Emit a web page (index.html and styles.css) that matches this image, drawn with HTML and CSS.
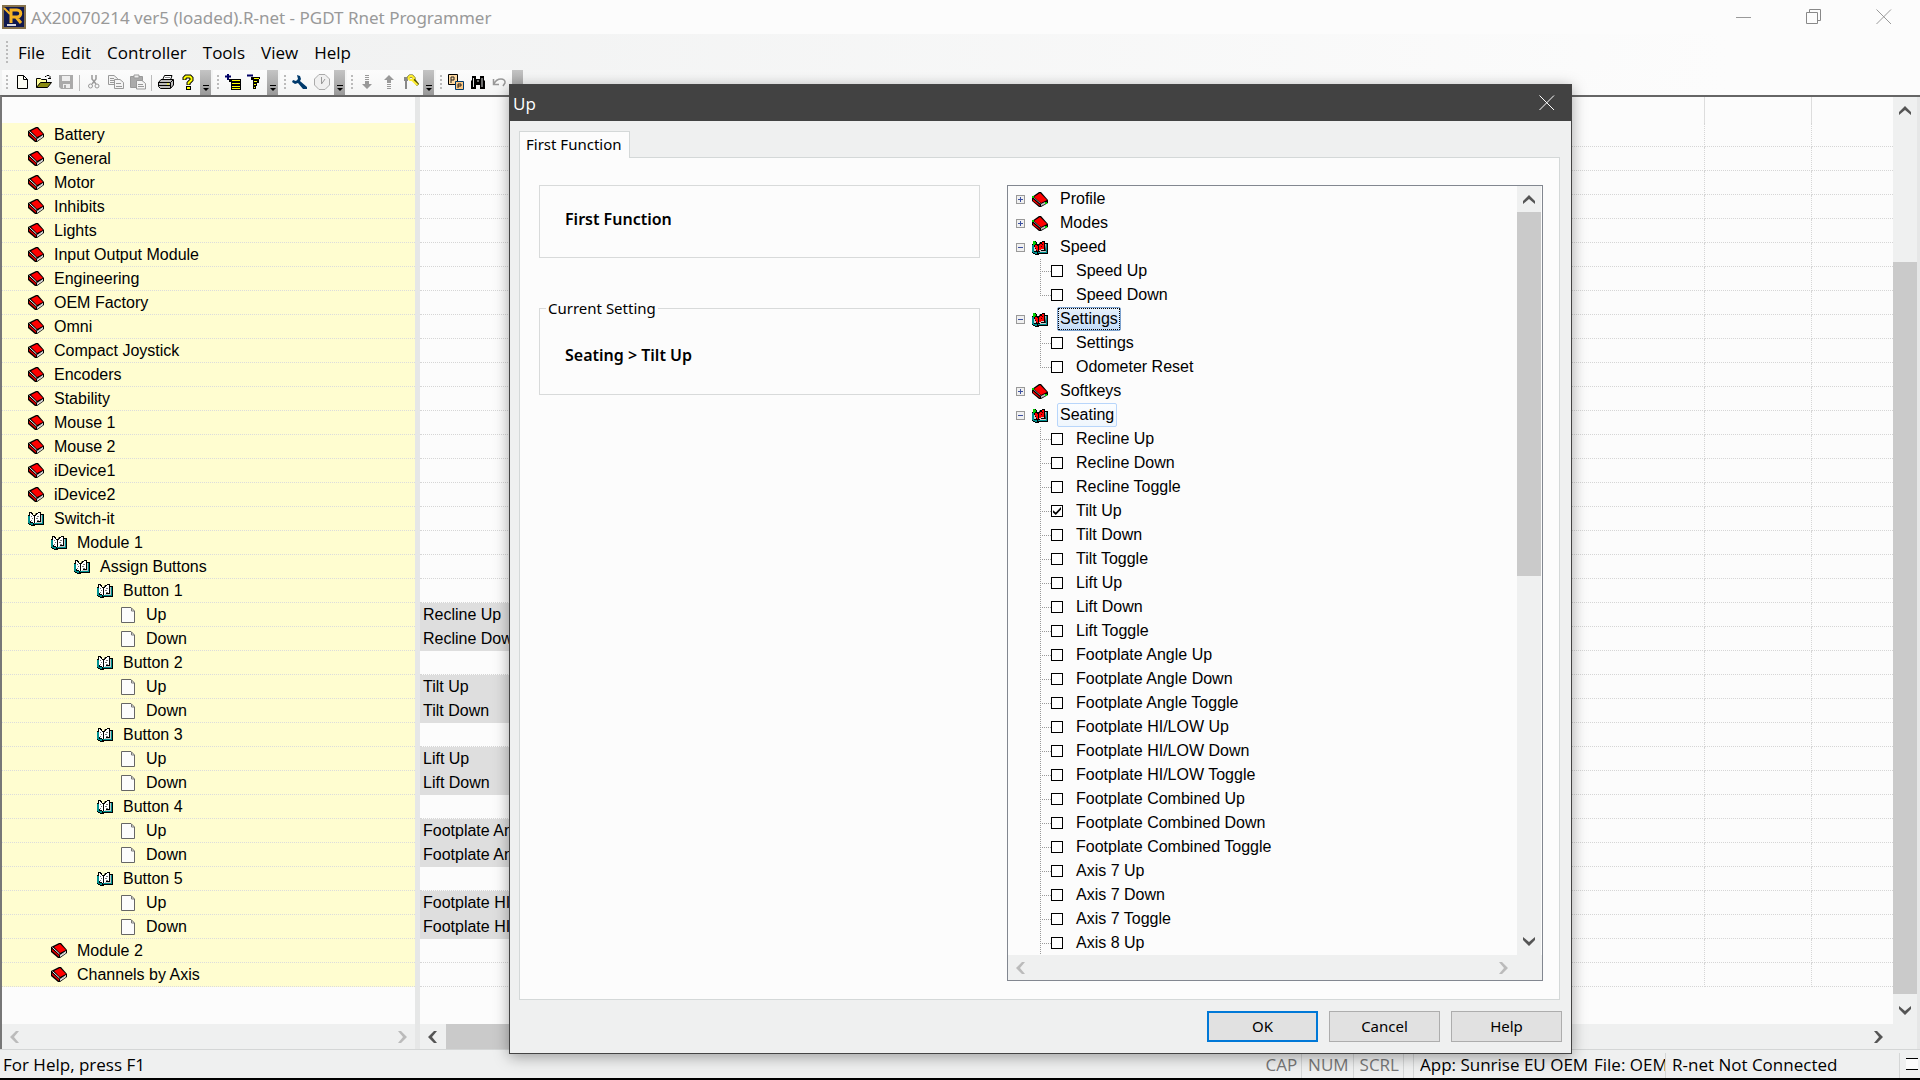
FILE: index.html
```html
<!DOCTYPE html>
<html lang="en">
<head>
    <meta charset="UTF-8">
    <meta name="viewport" content="width=device-width, initial-scale=1.0">
    <title>AX20070214 ver5 (loaded).R-net - PGDT Rnet Programmer</title>
    <link rel="stylesheet" href="styles.css">
</head>
<body>

<!-- Icon sprites -->
<svg class="sprites" aria-hidden="true">
    <symbol id="i-book" viewBox="0 0 16 15">
        <path d="M0 4L8 0H10L16 7V10L9 15H7L0 9Z" fill="#000"/>
        <path d="M3 4L9 1L15 7L9 10Z" fill="#f00"/>
        <path d="M1 6L8 12V14L1 8Z" fill="#e00000"/>
        <path d="M1.500 4.500L8.500 11" stroke="#fff"/>
        <path d="M9 12L15 8V10L9 14Z" fill="#fff"/>
        <path d="M9 12.500L15 9" stroke="#888" stroke-width=".5"/>
    </symbol>
    <symbol id="i-book-dlg" viewBox="0 0 16 15">
        <path d="M0 5L7 0H9L16 8V11L9 15H7L0 9Z" fill="#000"/>
        <path d="M2 5L8 1L15 8L9 11Z" fill="#f00"/>
        <path d="M1 7L8 13V14L1 9Z" fill="#f00"/>
        <path d="M1.500 5.500L8.500 11.500" stroke="#888"/>
        <path d="M9 12L13 10V12L9 14Z" fill="#c0c0c0"/>
        <path d="M0 4h2v2h-2zM13 10h2v2h-2z" fill="#0c0"/>
    </symbol>
    <symbol id="i-open" viewBox="0 0 16 15">
        <path d="M0 4H1V1H4V2H5V4H7L8 2H10V1H13V3H16V14H7V15H3V14H1V13H0Z" fill="#000"/>
        <path d="M0 5H2V12H5V14H3V13H1V12H0ZM6 12H14V4H15V13H6Z" fill="#009090"/>
        <path d="M2 2H3V3H4V4H5V5H6V12H5V11H3V10H2ZM7 5H8V4H9V3H10V2H12V10H9V11H8V12H7Z" fill="#fff"/>
        <path d="M13 4H14V12H8V11H13Z" fill="#c8c8c8"/>
        <path d="M3 5h1v1h-1zM4 7h1v1h-1zM3 9h1v1h-1zM9 5h2v1h-2zM8 7h2v1h-2zM9 9h2v1h-2z" fill="#777"/>
    </symbol>
    <symbol id="i-open-dlg" viewBox="0 0 16 15">
        <path d="M0 4H1V1H4V2H5V4H7L8 2H10V1H13V3H16V14H7V15H3V14H1V13H0Z" fill="#000"/>
        <path d="M0 5H2V12H5V14H3V13H1V12H0ZM6 12H14V4H15V13H6Z" fill="#009090"/>
        <path d="M1 1H3V2H4V4H3V5H1Z" fill="#0c0"/>
        <path d="M3 5H5V6H6V11H5V10H4V8H3ZM7 5H8V4H10V2H12V9H9V10H7Z" fill="#f00"/>
        <path d="M2 7H3V9H4V11H2ZM7 10H9V9H12V10H9V11H7ZM13 4H14V11H8V12H14Z" fill="#ccc"/>
        <path d="M10 4h1v1h-1zM9 6h1v1h-1z" fill="#400"/>
    </symbol>
    <symbol id="i-doc" viewBox="0 0 14 16">
        <path d="M.5.5H10L13.500 4V15.500H.5Z" fill="#fcfcfc" stroke="#666"/>
        <path d="M10.500 1V4H13" fill="none" stroke="#777"/>
    </symbol>
    <symbol id="i-up" viewBox="0 0 12 10"><path d="M0 9V6L6 0L12 6V9L6 4Z" fill="currentColor"/></symbol>
    <symbol id="i-down" viewBox="0 0 12 10"><path d="M0 1V4L6 10L12 4V1L6 6Z" fill="currentColor"/></symbol>
    <symbol id="i-left" viewBox="0 0 10 12"><path d="M9 0H6L0 6L6 12H9L4 6Z" fill="currentColor"/></symbol>
    <symbol id="i-right" viewBox="0 0 10 12"><path d="M1 0H4L10 6L4 12H1L6 6Z" fill="currentColor"/></symbol>
</svg>

<div class="window">
    <header class="titlebar">
        <svg class="app-icon" viewBox="0 0 24 24">
            <rect x="1" y="1" width="22" height="22" fill="#10194f" stroke="#85714c" stroke-width="2"/>
            <path d="M9 18V5H15C20 5 20 12 15 12H10M14 12L19 18" fill="none" stroke="#f5b324" stroke-width="3"/>
            <path d="M2 3L8 9" stroke="#f5b324" stroke-width="2"/>
            <path d="M5 19H14V21H5Z" fill="#d8d8e0"/>
        </svg>
        <h1>AX20070214 ver5 (loaded).R-net - PGDT Rnet Programmer</h1>
        <div class="win-buttons">
            <button aria-label="Minimize"><svg width="16" height="16"><path d="M0 8.500H15" stroke="#999"/></svg></button>
            <button aria-label="Restore"><svg width="16" height="16"><path d="M.5 3.500H11.500V14.500H.5ZM3.500 3V.5H14.500V11.500H12" fill="none" stroke="#888"/></svg></button>
            <button aria-label="Close"><svg width="16" height="16"><path d="M.5.5L15 15M15 .5L.5 15" stroke="#999"/></svg></button>
        </div>
    </header>

    <nav class="menubar">
        <button>File</button>
        <button>Edit</button>
        <button>Controller</button>
        <button>Tools</button>
        <button>View</button>
        <button>Help</button>
    </nav>

    <div class="toolbar">
        <div class="tool-group">
            <button aria-label="New"><svg width="16" height="16"><path d="M3.500 1.500H9.500L13.500 5.500V14.500H3.500ZM9.500 1.500V5.500H13.500" fill="#fcfcf4" stroke="#000"/></svg></button>
            <button aria-label="Open"><svg width="16" height="16"><path d="M.5 13.500V4.500H4.500L5.500 5.500H10.500V8" fill="#ffff9c" stroke="#000"/><path d="M.5 13.500L4.500 8.500H15.500L11.500 13.500Z" fill="#8b8b10" stroke="#000"/><path d="M9 2.500H10L11 1.500H13L14 2.500V5M12 4.500H15" fill="none" stroke="#000"/></svg></button>
            <button aria-label="Save"><svg width="16" height="16"><path d="M1 1H15V15H3L1 13Z" fill="#aaa"/><path d="M4 2H12V7H4ZM5 10H12V14H5Z" fill="#eee"/><path d="M6 11H8V14H6Z" fill="#aaa"/></svg></button>
            <span class="sep"></span>
            <button aria-label="Cut"><svg width="16" height="16"><path d="M6 1V5L10 10M10 1V5L6 10" fill="none" stroke="#999" stroke-width="1.500"/><circle cx="4.500" cy="12" r="2" fill="none" stroke="#999"/><circle cx="11" cy="12" r="2" fill="none" stroke="#999"/></svg></button>
            <button aria-label="Copy"><svg width="16" height="16"><path d="M.5 1.500H6L9.500 4.500V10.500H.5Z" fill="#f4f4f4" stroke="#999"/><path d="M6.500 5.500H12L15.500 8.500V14.500H6.500Z" fill="#f4f4f4" stroke="#999"/><path d="M2 4.500H6M2 6.500H6M2 8.500H6M8 9.500H13M8 12.500H14" stroke="#999"/></svg></button>
            <button aria-label="Paste"><svg width="16" height="16"><path d="M.5 2.500H12.500V13.500H.5Z" fill="#aaa" stroke="#999"/><path d="M4 1H9V4H4Z" fill="#eee" stroke="#999"/><path d="M6.500 6.500H12L15.500 9.500V15H6.500Z" fill="#f4f4f4" stroke="#999"/><path d="M8 10.500H13M8 12.500H14" stroke="#999"/></svg></button>
            <span class="sep"></span>
            <button aria-label="Print"><svg width="16" height="16"><path d="M4.500 6L6.500 1.500H14L12.500 6" fill="#fff" stroke="#000"/><path d="M.5 8.500L3 5.500H15.500V11L12.500 14.500H2.500L.5 12.500Z" fill="#bbb" stroke="#000"/><path d="M0 8.500H12.500V14M12.500 8.500L15 6M1 11.500H12" fill="none" stroke="#000"/><path d="M9 10H11" stroke="#ff0"/><path d="M7 3.500H12" stroke="#888"/></svg></button>
            <button aria-label="Help"><svg width="16" height="16"><path d="M4.500 6V4L6 2.500H10L11.500 4V6L8.500 9V11" fill="none" stroke="#000" stroke-width="4"/><path d="M6 12H11V16H6Z" fill="#000"/><path d="M4.500 5.500V4L6 2.500H10L11.500 4V6L8.500 9V10.500" fill="none" stroke="#ff0" stroke-width="2"/><path d="M7 13H10V15H7Z" fill="#ff0"/></svg></button>
            <button class="more" aria-label="More buttons"></button>
        </div>
        <div class="tool-group">
            <button aria-label="Expand"><svg width="16" height="16"><path d="M0 2.500H6M3 0V6" stroke="#006" stroke-width="2"/><path d="M4 5H16V16H6V8H4Z" fill="#000"/><path d="M7 6.500H15M7 9.500H15M7 12.500H15M7 14.500H15" stroke="#ff0"/></svg></button>
            <button aria-label="Collapse"><svg width="16" height="16"><path d="M0 1.500H6" stroke="#006" stroke-width="2"/><path d="M4 3H13V5H12V9H10V12H9V15H6V6H4Z" fill="#000"/><path d="M7 4.500H12M7 7.500H10M7 10.500H9M7 13.500H8" stroke="#ff0"/></svg></button>
            <button class="more" aria-label="More buttons"></button>
        </div>
        <div class="tool-group">
            <button aria-label="Settings"><svg width="16" height="16"><path d="M5 1L8 2L9 5L8 7L15 13V15H11L6 9L3 10L0 8L1 6L4 7L6 5Z" fill="#003a6c"/></svg></button>
            <button aria-label="Timer"><svg width="16" height="16"><path d="M5 .5H11L15.500 5V11L11 15.500H5L.5 11V5Z" fill="#f0f0f0" stroke="#aaa" stroke-width="1"/><path d="M7.500 3V10L11 5" fill="none" stroke="#999"/></svg></button>
            <button class="more" aria-label="More buttons"></button>
        </div>
        <div class="tool-group">
            <button aria-label="Read"><svg width="16" height="16"><path d="M6 1.500H10M6 3.500H10M6 5.500H10" stroke="#999"/><path d="M6 7H10V10H13L8 15L3 10H6Z" fill="#999"/></svg></button>
            <button aria-label="Write"><svg width="16" height="16"><path d="M6 14.500H10M6 12.500H10M6 10.500H10" stroke="#999"/><path d="M6 9H10V6H13L8 1L3 6H6Z" fill="#999"/></svg></button>
            <button aria-label="Keys"><svg width="16" height="16"><path d="M1 3H5V7H4V15H2V7H1Z" fill="#888"/><path d="M5 4L7 2H9L11 4V6L15 11" fill="none" stroke="#555500" stroke-width="3"/><path d="M5 4L7 2H9L11 4L9 6H7L5 4M9 6L14.500 11" fill="none" stroke="#fe3" stroke-width="2"/></svg></button>
            <button class="more" aria-label="More buttons"></button>
        </div>
        <div class="tool-group">
            <button aria-label="Parameters"><svg width="16" height="16"><path d="M.5.5H9.500V10.500H.5Z" fill="#ffd9a0" stroke="#000"/><path d="M7.500 7.500H15.500V15.500H7.500Z" fill="#ffc880" stroke="#003a6c"/><path d="M3 9V3H6V6H3M10 14V10H13V12H10" fill="none" stroke="#222"/></svg></button>
            <button aria-label="Find"><svg width="16" height="16"><path d="M2 2H6V5H10V2H14V6L15 7V15H10V11H6V15H1V7L2 6Z" fill="#000"/><path d="M3.500 4V13M12 4V13M7 7H9" stroke="#ddd"/></svg></button>
            <button aria-label="Undo"><svg width="16" height="16"><path d="M1.500 5V10.500H7M2 10C5 3 14 4 13 9L11 12" fill="none" stroke="#999" stroke-width="1.500"/></svg></button>
            <button class="more" aria-label="More buttons"></button>
        </div>
    </div>

    <main class="workspace">
        <section class="pane nav-pane">
            <ul class="nav-tree" id="navTree"></ul>
            <div class="hscroll off">
                <button aria-label="Scroll left"><svg width="10" height="12"><use href="#i-left"/></svg></button>
                <span class="track"></span>
                <button aria-label="Scroll right"><svg width="10" height="12"><use href="#i-right"/></svg></button>
            </div>
        </section>
        <section class="pane value-pane">
            <div class="value-body">
                <div class="value-area">
                    <table class="values">
                        <thead><tr id="valueHead"></tr></thead>
                        <tbody id="valueBody"></tbody>
                    </table>
                </div>
                <div class="vscroll">
                    <button aria-label="Scroll up"><svg width="12" height="10"><use href="#i-up"/></svg></button>
                    <span class="track"><span class="thumb value-thumb"></span></span>
                    <button aria-label="Scroll down"><svg width="12" height="10"><use href="#i-down"/></svg></button>
                </div>
            </div>
            <div class="hscroll with-corner">
                <button aria-label="Scroll left"><svg width="10" height="12"><use href="#i-left"/></svg></button>
                <span class="track"><span class="thumb"></span></span>
                <button aria-label="Scroll right"><svg width="10" height="12"><use href="#i-right"/></svg></button>
            </div>
        </section>
    </main>

    <footer class="statusbar">
        <span class="hint">For Help, press F1</span>
        <span class="key">CAP</span>
        <span class="key">NUM</span>
        <span class="key">SCRL</span>
        <span class="gap"></span>
        <span class="app">App: Sunrise EU OEM</span>
        <span class="file">File: OEM</span>
        <span class="link">R-net Not Connected</span>
        <span class="grip"></span>
    </footer>
</div>

<div class="dialog" role="dialog" aria-labelledby="dlgTitle">
    <div class="dialog-title">
        <h2 id="dlgTitle">Up</h2>
        <button aria-label="Close"><svg width="16" height="16"><path d="M.5.5L15 15M15 .5L.5 15" stroke="#fff"/></svg></button>
    </div>
    <div class="dialog-body">
        <button class="tab">First Function</button>
        <div class="tab-page">
            <div class="groups">
                <div class="group name-group"><b>First Function</b></div>
                <fieldset class="group">
                    <legend>Current Setting</legend>
                    <b>Seating &gt; Tilt Up</b>
                </fieldset>
            </div>
            <div class="picker">
                <div class="picker-body">
                    <ul class="picker-tree" id="pickerTree"></ul>
                    <div class="vscroll">
                        <button aria-label="Scroll up"><svg width="12" height="10"><use href="#i-up"/></svg></button>
                        <span class="track"><span class="thumb picker-thumb"></span></span>
                        <button aria-label="Scroll down"><svg width="12" height="10"><use href="#i-down"/></svg></button>
                    </div>
                </div>
                <div class="hscroll with-corner off">
                    <button aria-label="Scroll left"><svg width="10" height="12"><use href="#i-left"/></svg></button>
                    <span class="track"></span>
                    <button aria-label="Scroll right"><svg width="10" height="12"><use href="#i-right"/></svg></button>
                </div>
            </div>
        </div>
        <div class="dialog-buttons">
            <button class="default">OK</button>
            <button>Cancel</button>
            <button>Help</button>
        </div>
    </div>
</div>

<script>
    // [level, icon, label, value]
    const navItems = [
        [0, 'book', 'Battery'], [0, 'book', 'General'], [0, 'book', 'Motor'], [0, 'book', 'Inhibits'],
        [0, 'book', 'Lights'], [0, 'book', 'Input Output Module'], [0, 'book', 'Engineering'],
        [0, 'book', 'OEM Factory'], [0, 'book', 'Omni'], [0, 'book', 'Compact Joystick'],
        [0, 'book', 'Encoders'], [0, 'book', 'Stability'], [0, 'book', 'Mouse 1'], [0, 'book', 'Mouse 2'],
        [0, 'book', 'iDevice1'], [0, 'book', 'iDevice2'],
        [0, 'open', 'Switch-it'], [1, 'open', 'Module 1'], [2, 'open', 'Assign Buttons'],
        [3, 'open', 'Button 1'], [4, 'doc', 'Up', 'Recline Up'], [4, 'doc', 'Down', 'Recline Down'],
        [3, 'open', 'Button 2'], [4, 'doc', 'Up', 'Tilt Up'], [4, 'doc', 'Down', 'Tilt Down'],
        [3, 'open', 'Button 3'], [4, 'doc', 'Up', 'Lift Up'], [4, 'doc', 'Down', 'Lift Down'],
        [3, 'open', 'Button 4'], [4, 'doc', 'Up', 'Footplate Angle Up'], [4, 'doc', 'Down', 'Footplate Angle Down'],
        [3, 'open', 'Button 5'], [4, 'doc', 'Up', 'Footplate HI/LOW Up'], [4, 'doc', 'Down', 'Footplate HI/LOW Down'],
        [1, 'book', 'Module 2'], [1, 'book', 'Channels by Axis']
    ];

    const pickerItems = [
        { name: 'Profile' },
        { name: 'Modes' },
        { name: 'Speed', children: ['Speed Up', 'Speed Down'] },
        { name: 'Settings', state: 'selected', children: ['Settings', 'Odometer Reset'] },
        { name: 'Softkeys' },
        { name: 'Seating', state: 'hot', more: true, children: [
            'Recline Up', 'Recline Down', 'Recline Toggle', 'Tilt Up', 'Tilt Down', 'Tilt Toggle',
            'Lift Up', 'Lift Down', 'Lift Toggle',
            'Footplate Angle Up', 'Footplate Angle Down', 'Footplate Angle Toggle',
            'Footplate HI/LOW Up', 'Footplate HI/LOW Down', 'Footplate HI/LOW Toggle',
            'Footplate Combined Up', 'Footplate Combined Down', 'Footplate Combined Toggle',
            'Axis 7 Up', 'Axis 7 Down', 'Axis 7 Toggle', 'Axis 8 Up'
        ] }
    ];
    const current = 'Tilt Up';
    const columns = 4;

    // Parameter tree and the value grid next to it
    function viewParameters() {
        const blank = '<td></td>'.repeat(columns - 1);
        document.getElementById('valueHead').innerHTML = '<th></th>'.repeat(columns);
        navItems.forEach(([level, icon, label, value]) => {
            document.getElementById('navTree').innerHTML += `
                <li class="level-${level}"><svg class="icon-${icon}"><use href="#i-${icon}"/></svg>${label}</li>`;
            document.getElementById('valueBody').innerHTML += value
                ? `<tr class="filled"><td>${value}</td>${blank}</tr>`
                : `<tr><td></td>${blank}</tr>`;
        });
    }

    // Function list in the dialog
    function viewFunctions() {
        let html = '';
        pickerItems.forEach((item, i) => {
            const open = item.children;
            html += `<li>
                <div class="node">
                    <button class="expander ${open ? 'open' : ''}" aria-label="Toggle ${item.name}"></button>
                    <svg class="icon-book"><use href="#i-${open ? 'open' : 'book'}-dlg"/></svg>
                    <span class="node-name ${item.state || ''}">${item.name}</span>
                </div>`;
            if (open) {
                html += `<ul class="${item.more ? 'more-below' : ''}">`;
                open.forEach((name, j) => {
                    const id = `fn-${i}-${j}`;
                    html += `<li><input type="checkbox" id="${id}" ${name === current ? 'checked' : ''}><label for="${id}">${name}</label></li>`;
                });
                html += '</ul>';
            }
            html += '</li>';
        });
        document.getElementById('pickerTree').innerHTML = html;
    }

    viewParameters();
    viewFunctions();
</script>

</body>
</html>
```
FILE: styles.css
```css
* {
    margin: 0;
    padding: 0;
    box-sizing: border-box;
}
body {
    height: 100vh;
    background: #fcfcfc;
    color: #000;
    font-family: "Liberation Sans", Arial, sans-serif;
    font-size: 16px;
    overflow: hidden;
}
button {
    background: none;
    border: none;
    font: inherit;
    color: inherit;
}
ul {
    list-style: none;
}
svg {
    display: block;
    flex: none;
}
.sprites {
    position: absolute;
    width: 0;
    height: 0;
}
.window {
    display: flex;
    flex-direction: column;
    height: 100vh;
    border-bottom: 2px solid #000;
}

/* Title bar */
.titlebar {
    display: flex;
    align-items: center;
    height: 34px;
    padding: 0 1px 0 2px;
}
.app-icon {
    width: 24px;
    height: 24px;
    margin-right: 5px;
}
.titlebar h1 {
    flex: 1;
    font-family: "Noto Sans", "Open Sans", sans-serif;
    font-size: 17px;
    font-weight: normal;
    color: #999;
}
.win-buttons {
    display: flex;
}
.win-buttons button {
    display: flex;
    justify-content: center;
    width: 70px;
}

/* Menu and toolbar */
.menubar {
    display: flex;
    align-items: center;
    height: 36px;
    padding-left: 12px;
    background: linear-gradient(to right, #eff0f0, #fcfcfc 90%);
    font-family: "Open Sans", "Noto Sans", sans-serif;
    font-size: 17px;
}
.menubar::before {
    content: "";
    width: 2px;
    height: 22px;
    margin: 0 2px 0 -6px;
    background: repeating-linear-gradient(#bbb 0 2px, transparent 2px 4px);
}
.menubar button {
    padding: 0 8px;
}
.toolbar {
    display: flex;
    gap: 2px;
    height: 25px;
    padding-left: 2px;
    background: linear-gradient(to right, #f2f3f3, #fcfcfc 90%);
}
.tool-group {
    display: flex;
    align-items: center;
    background: linear-gradient(#fcfcfc, #f4f5f5);
}
.tool-group::before {
    content: "";
    width: 2px;
    height: 16px;
    margin: 0 4px;
    background: repeating-linear-gradient(#bbb 0 2px, transparent 2px 4px);
}
.tool-group button {
    display: flex;
    justify-content: flex-start;
    width: 22px;
    padding: 0 0 1px 2px;
}
.sep {
    width: 1px;
    height: 16px;
    margin: 0 4px 0 1px;
    background: #bbb;
}
.tool-group .more {
    flex-direction: column;
    justify-content: flex-end;
    align-items: center;
    gap: 2px;
    width: 11px;
    height: 25px;
    padding: 0 0 4px;
    background: linear-gradient(#c4c4c4, #999);
}
.tool-group .more::before {
    content: "";
    width: 6px;
    height: 1px;
    background: #000;
}
.tool-group .more::after {
    content: "";
    border: 3px solid transparent;
    border-top-color: #000;
    border-bottom: 0;
}

/* Workspace */
.workspace {
    flex: 1;
    display: flex;
    gap: 5px;
    min-height: 0;
    padding-right: 3px;
    background: #e6e7e7;
    border-top: 2px solid #666;
    border-left: 2px solid #777;
}
.pane {
    display: flex;
    flex-direction: column;
    min-height: 0;
    background: #fcfcfc;
}
.nav-pane {
    width: 413px;
}
.nav-tree {
    flex: 1;
    padding-top: 26px;
    overflow: hidden;
}
.nav-tree li {
    display: flex;
    align-items: center;
    height: 24px;
    background: #fffdd0;
    border-bottom: 1px dotted #dcdcdc;
}
.nav-tree svg {
    width: 16px;
    height: 15px;
    margin-right: 10px;
}
.nav-tree .icon-doc {
    width: 14px;
    height: 16px;
    margin: 0 11px 0 1px;
}
.level-0 { padding-left: 26px; }
.level-1 { padding-left: 49px; }
.level-2 { padding-left: 72px; }
.level-3 { padding-left: 95px; }
.level-4 { padding-left: 118px; }

.value-pane {
    flex: 1;
    min-width: 0;
}
.value-body {
    flex: 1;
    display: flex;
    min-height: 0;
}
.value-area {
    flex: 1;
    overflow: hidden;
}
.values {
    width: 100%;
    table-layout: fixed;
    border-collapse: separate;
    border-spacing: 0;
}
.values th {
    width: 107px;
    height: 26px;
    border-right: 1px solid #ddd;
}
.values th:first-child {
    width: 180px;
}
.values th:nth-child(2) {
    width: auto;
}
.values th:last-child {
    width: 81px;
}
.values td {
    height: 24px;
    padding-left: 3px;
    border-right: 1px dotted #d6d6d6;
    border-bottom: 1px dotted #d6d6d6;
    white-space: nowrap;
}
.values th:last-child, .values td:last-child {
    border-right: none;
}
.filled td:first-child {
    background: #dedede;
    border-color: #dedede;
}

/* Scroll bars */
.hscroll, .vscroll {
    display: flex;
    background: #eff0f0;
    color: #555;
}
.hscroll {
    height: 25px;
}
.with-corner {
    padding-right: 26px;
}
.vscroll {
    flex-direction: column;
    width: 24px;
}
.hscroll button, .vscroll button {
    display: flex;
    align-items: center;
    justify-content: center;
    width: 26px;
    height: 25px;
}
.vscroll button {
    width: 24px;
    height: 28px;
}
.hscroll.off {
    color: #bbb;
}
.track {
    flex: 1;
    display: flex;
    min-height: 0;
}
.thumb {
    background: #cacaca;
}
.hscroll .thumb {
    width: 60%;
}
.vscroll .thumb {
    width: 100%;
}
.value-thumb {
    height: 84%;
    margin-top: 137px;
}
.picker-thumb {
    height: 51%;
    margin-top: -2px;
}

/* Status bar */
.statusbar {
    display: flex;
    align-items: flex-end;
    gap: 6px;
    height: 29px;
    padding: 0 2px 0 3px;
    background: #eff0f0;
    border-top: 1px solid #d4d6d6;
    font-family: "Open Sans", "Noto Sans", sans-serif;
    font-size: 17px;
    white-space: nowrap;
}
.statusbar span {
    height: 25px;
    overflow: hidden;
}
.hint {
    flex: 1;
}
.key {
    padding-right: 4px;
    border-right: 1px solid #d4d6d6;
    color: #777;
}
.gap {
    width: 4px;
    border-right: 1px solid #d4d6d6;
}
.app {
    width: 168px;
}
.file {
    width: 72px;
    border-right: 1px solid #d4d6d6;
}
.link {
    width: 228px;
    border-right: 1px solid #d4d6d6;
}
.statusbar .grip {
    align-self: center;
    width: 12px;
    height: 12px;
    background: #fcfcfc;
    border: solid #000;
    border-width: 1px 0;
}

/* Dialog */
.dialog {
    position: absolute;
    top: 84px;
    right: 348px;
    bottom: 26px;
    left: 509px;
    display: flex;
    flex-direction: column;
    background: #eff0f0;
    border: 1px solid #444;
    box-shadow: 0 3px 14px rgba(0, 0, 0, 0.35);
}
.dialog-title {
    display: flex;
    align-items: center;
    justify-content: space-between;
    height: 36px;
    padding: 0 16px 0 3px;
    background: #424242;
    color: #fff;
}
.dialog-title h2 {
    font-family: "Open Sans", "Noto Sans", sans-serif;
    font-size: 17px;
    font-weight: normal;
}
.dialog-body {
    flex: 1;
    display: flex;
    flex-direction: column;
    min-height: 0;
    padding: 10px 9px 11px;
    font-family: "Noto Sans", "Open Sans", sans-serif;
    font-size: 15px;
}
.tab {
    align-self: flex-start;
    z-index: 1;
    height: 27px;
    margin-bottom: -1px;
    padding: 0 7px 3px 6px;
    background: #fcfcfc;
    border: 1px solid #d4d8d8;
    border-bottom: 0;
}
.tab-page {
    flex: 1;
    display: flex;
    gap: 27px;
    min-height: 0;
    margin-right: 2px;
    padding: 27px 16px 18px 19px;
    background: #fcfcfc;
    border: 1px solid #d4d8d8;
}
.groups {
    width: 441px;
}
.group {
    padding-left: 25px;
    border: 1px solid #d8dada;
}
.group b {
    font-size: 16px;
    font-weight: 600;
}
.name-group {
    height: 73px;
    margin-bottom: 40px;
    padding-top: 22px;
}
fieldset.group {
    height: 97px;
}
.group legend {
    margin-left: -19px;
    padding: 0 2px;
}
fieldset b {
    display: block;
    margin-top: 26px;
}
.picker {
    flex: 1;
    display: flex;
    flex-direction: column;
    border: 1px solid #828790;
}
.picker-body {
    flex: 1;
    display: flex;
    min-height: 0;
    padding-right: 1px;
}
.picker-tree {
    flex: 1;
    padding: 1px 0 0 8px;
    overflow: hidden;
    font-family: "Liberation Sans", Arial, sans-serif;
    font-size: 16px;
}
.node {
    display: flex;
    align-items: center;
    height: 24px;
}
.expander {
    width: 9px;
    height: 9px;
    border: 1px solid #999;
    background: linear-gradient(#3c50a0, #3c50a0) center / 5px 1px no-repeat,
                linear-gradient(#3c50a0, #3c50a0) center / 1px 5px no-repeat, #f0f0f0;
}
.expander.open {
    background: linear-gradient(#3c50a0, #3c50a0) center / 5px 1px no-repeat, #f0f0f0;
}
.node svg {
    width: 16px;
    height: 15px;
    margin: 0 9px 0 7px;
}
.node-name {
    height: 24px;
    padding: 0 2px;
    border: 1px solid transparent;
    border-radius: 2px;
    line-height: 22px;
}
.node-name.selected {
    background: linear-gradient(#e8f2fc, #c4dcf8);
    border-color: #7da2ce;
    outline: 1px dotted #000;
    outline-offset: -2px;
}
.node-name.hot {
    background: linear-gradient(#fbfdff, #eff6fd);
    border-color: #b8d6fb;
}
.picker-tree ul {
    padding-left: 24px;
}
.picker-tree ul li {
    display: flex;
    align-items: center;
    height: 24px;
}
/* dotted branch: vertical run, then the stub to the tick box */
.picker-tree ul li::before {
    content: "";
    align-self: flex-start;
    width: 10px;
    height: 12px;
    border-left: 1px dotted #999;
    border-bottom: 1px dotted #999;
}
.picker-tree ul li:not(:last-child), .more-below li {
    background: repeating-linear-gradient(#999 0 1px, transparent 1px 2px) left / 1px 100% no-repeat;
}
.picker-tree input {
    appearance: none;
    position: relative;
    width: 12px;
    height: 12px;
    margin-right: 13px;
    background: #fff;
    border: 1px solid #000;
}
.picker-tree input:checked::after {
    content: "";
    position: absolute;
    inset: 1px;
    background: #000;
    clip-path: polygon(0 40%, 35% 70%, 100% 0, 100% 30%, 35% 100%, 0 70%);
}
.dialog-buttons {
    display: flex;
    justify-content: flex-end;
    gap: 11px;
    padding-top: 11px;
}
.dialog-buttons button {
    width: 111px;
    height: 31px;
    padding-bottom: 1px;
    background: #e1e1e1;
    border: 1px solid #adadad;
}
.dialog-buttons .default {
    border: 2px solid #0078d7;
}
```
